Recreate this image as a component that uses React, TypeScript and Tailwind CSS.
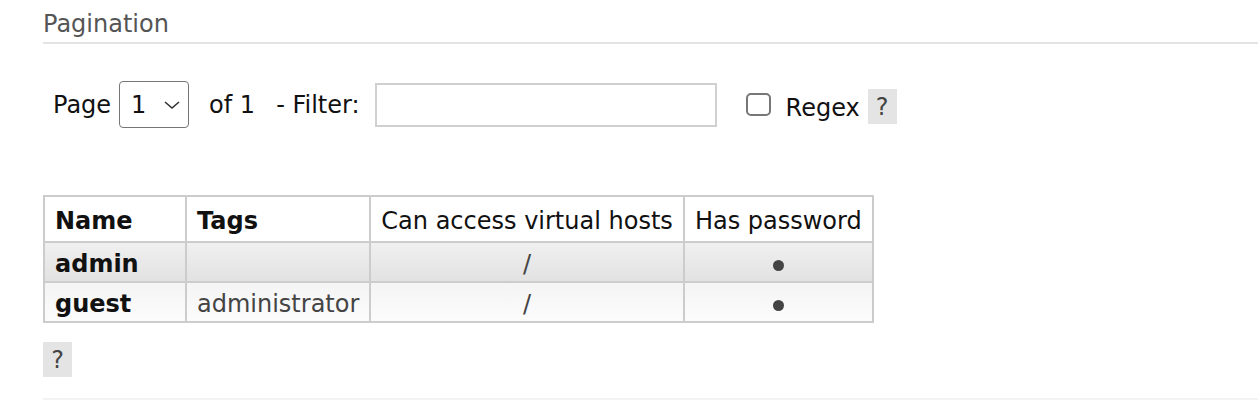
import React from "react"

// ─── Users list (RabbitMQ-style) ────────────────────────────────────────────
const users = [
  { name: "admin", tags: "", vhosts: "/", hasPassword: true },
  { name: "guest", tags: "administrator", vhosts: "/", hasPassword: true },
]

function HelpButton() {
  return (
    <span className="inline-flex items-center justify-center w-[29px] h-[35px] bg-[#e4e4e4] text-[#444] text-[24px] leading-none">?</span>
  )
}

export default function App() {
  return (
    <div className="bg-white min-h-[402px] pl-[43px] font-['DejaVu_Sans','Verdana',sans-serif] text-[24px] text-[#111]">
      <h3 className="pt-[10px] pb-[4px] leading-[28px] text-[#555] border-b-2 border-[#e3e3e3]">Pagination</h3>

      <div className="flex items-center mt-[37px] ml-[10px] h-[47px]">
        <span>Page</span>
        <div className="ml-[8px] w-[70px] h-[47px] border border-[#767676] rounded-[4px] flex items-center pl-[11px] pr-[6px] justify-between">
          <span>1</span>
          <svg width="20" height="12" viewBox="0 0 20 12" fill="none" stroke="#333" strokeWidth="1.6">
            <path d="M3 3 L10 9 L17 3" />
          </svg>
        </div>
        <span className="ml-[20px]">of 1</span>
        <span className="ml-[21px]">- Filter:</span>
        <div className="ml-[15px] w-[342px] h-[44px] border-2 border-[#d0d0d0] bg-white" />
        <div className="ml-[29px] w-[25px] h-[23px] border-2 border-[#777] rounded-[5px]" />
        <span className="ml-[15px] mt-[6px]">Regex</span>
        <span className="ml-[8px] mt-[4px]"><HelpButton /></span>
      </div>

      <table className="mt-[67px] border-collapse border-2 border-[#ccc]">
        <thead>
          <tr className="bg-white">
            <th className="border-2 border-[#ccc] w-[142px] px-[10px] pt-[10px] pb-[6px] text-left font-bold leading-[28px]">Name</th>
            <th className="border-2 border-[#ccc] w-[184px] px-[10px] pt-[10px] pb-[6px] text-left font-bold leading-[28px]">Tags</th>
            <th className="border-2 border-[#ccc] w-[313px] px-[10px] pt-[10px] pb-[6px] text-center font-normal leading-[28px] whitespace-nowrap">Can access virtual hosts</th>
            <th className="border-2 border-[#ccc] w-[189px] px-[10px] pt-[10px] pb-[6px] text-center font-normal leading-[28px] whitespace-nowrap">Has password</th>
          </tr>
        </thead>
        <tbody>
          {users.map((u, i) => {
            const bg = i % 2 === 0 ? "bg-linear-to-b from-[#f0f0f0] to-[#e2e2e2]" : "bg-linear-to-b from-[#f4f4f4] to-[#fcfcfc]"
            return (
              <tr key={u.name} className={bg}>
                <td className="border-2 border-[#ccc] px-[10px] pt-[7px] pb-[3px] font-bold leading-[28px]">{u.name}</td>
                <td className="border-2 border-[#ccc] px-[10px] pt-[7px] pb-[3px] text-[#444] leading-[28px]">{u.tags}</td>
                <td className="border-2 border-[#ccc] px-[10px] pt-[7px] pb-[3px] text-center text-[#444] leading-[28px]">{u.vhosts}</td>
                <td className="border-2 border-[#ccc] px-[10px] pt-[7px] pb-[3px] leading-[28px]">
                  {u.hasPassword && <div className="mx-auto mt-[2px] w-[11px] h-[11px] rounded-full bg-[#444]" />}
                </td>
              </tr>
            )
          })}
        </tbody>
      </table>

      <div className="mt-[19px] flex"><HelpButton /></div>
      <div className="mt-[21px] border-b-2 border-[#f3f3f3]" />
    </div>
  )
}
